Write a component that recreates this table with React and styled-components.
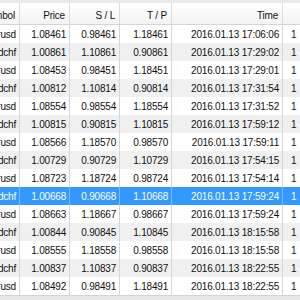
import React from "react";
import styled, { createGlobalStyle } from "styled-components";

const Global = createGlobalStyle`
  html, body { margin: 0; padding: 0; background: #ffffff; overflow: hidden; }
  * { box-sizing: border-box; }
`;

const Viewport = styled.div`
  width: 300px;
  height: 300px;
  overflow: hidden;
  display: flex;
  flex-direction: column;
  font-family: "Liberation Sans", Arial, sans-serif;
  font-size: 10px;
  letter-spacing: -0.2px;
  color: #111;
  background: #ffffff;
`;

const cols = "20px 50px 50px 52px 111px 40px";

const HeaderRow = styled.div`
  display: grid;
  grid-template-columns: ${cols};
  height: 25px;
  border-top: 3px solid #e9e9e9;
  border-bottom: 1px solid #d5d5d5;
  background: linear-gradient(#ffffff, #f3f3f3);
  flex: none;
`;

const HeadCell = styled.div`
  display: flex;
  align-items: center;
  justify-content: flex-end;
  padding-right: 4px;
  padding-top: 3px;
  border-right: 1px solid #dcdcdc;
  overflow: hidden;
  white-space: nowrap;
`;

const Row = styled.div`
  display: grid;
  grid-template-columns: ${cols};
  height: 18px;
  flex: none;
  background: ${(p) => (p.$selected ? "#3399ff" : p.$alt ? "#f0f0f0" : "#ffffff")};
  color: ${(p) => (p.$selected ? "#ffffff" : "#111111")};
`;

const Cell = styled.div`
  display: flex;
  align-items: center;
  justify-content: ${(p) => (p.$left ? "flex-start" : "flex-end")};
  padding-right: 3px;
  padding-left: ${(p) => (p.$left ? "8px" : "0")};
  padding-top: 1px;
  border-right: 1px solid ${(p) => (p.$selected ? "#79bcff" : "#d6d6d6")};
  overflow: hidden;
  white-space: nowrap;
`;

const BottomBar = styled.div`
  flex: 1;
  background: #e6e6e6;
  border-top: 1px solid #d3d3d3;
`;

const rows = [
  ["eurusd", "1.08461", "0.98461", "1.18461", "2016.01.13 17:06:06"],
  ["usdchf", "1.00861", "1.10861", "0.90861", "2016.01.13 17:29:02"],
  ["eurusd", "1.08453", "0.98451", "1.18451", "2016.01.13 17:29:01"],
  ["usdchf", "1.00812", "1.10814", "0.90814", "2016.01.13 17:31:54"],
  ["eurusd", "1.08554", "0.98554", "1.18554", "2016.01.13 17:31:52"],
  ["usdchf", "1.00815", "0.90815", "1.10815", "2016.01.13 17:59:12"],
  ["eurusd", "1.08566", "1.18570", "0.98570", "2016.01.13 17:59:11"],
  ["usdchf", "1.00729", "0.90729", "1.10729", "2016.01.13 17:54:15"],
  ["eurusd", "1.08723", "1.18724", "0.98724", "2016.01.13 17:54:14"],
  ["usdchf", "1.00668", "0.90668", "1.10668", "2016.01.13 17:59:24"],
  ["eurusd", "1.08663", "1.18667", "0.98667", "2016.01.13 17:59:24"],
  ["usdchf", "1.00844", "0.90845", "1.10845", "2016.01.13 18:15:58"],
  ["eurusd", "1.08555", "1.18558", "0.98558", "2016.01.13 18:15:58"],
  ["usdchf", "1.00837", "1.10837", "0.90837", "2016.01.13 18:22:55"],
  ["eurusd", "1.08492", "0.98491", "1.18491", "2016.01.13 18:22:55"],
];

export default function App() {
  return (
    <>
      <Global />
      <Viewport>
        <HeaderRow>
          <HeadCell>Symbol</HeadCell>
          <HeadCell>Price</HeadCell>
          <HeadCell>S / L</HeadCell>
          <HeadCell>T / P</HeadCell>
          <HeadCell>Time</HeadCell>
          <HeadCell />
        </HeaderRow>
        {rows.map((r, i) => {
          const sel = i === 9;
          return (
            <Row key={i} $alt={i % 2 === 1} $selected={sel}>
              <Cell $selected={sel}>{r[0]}</Cell>
              <Cell $selected={sel}>{r[1]}</Cell>
              <Cell $selected={sel}>{r[2]}</Cell>
              <Cell $selected={sel}>{r[3]}</Cell>
              <Cell $selected={sel}>{r[4]}</Cell>
              <Cell $left $selected={sel}>1</Cell>
            </Row>
          );
        })}
        <BottomBar />
      </Viewport>
    </>
  );
}
